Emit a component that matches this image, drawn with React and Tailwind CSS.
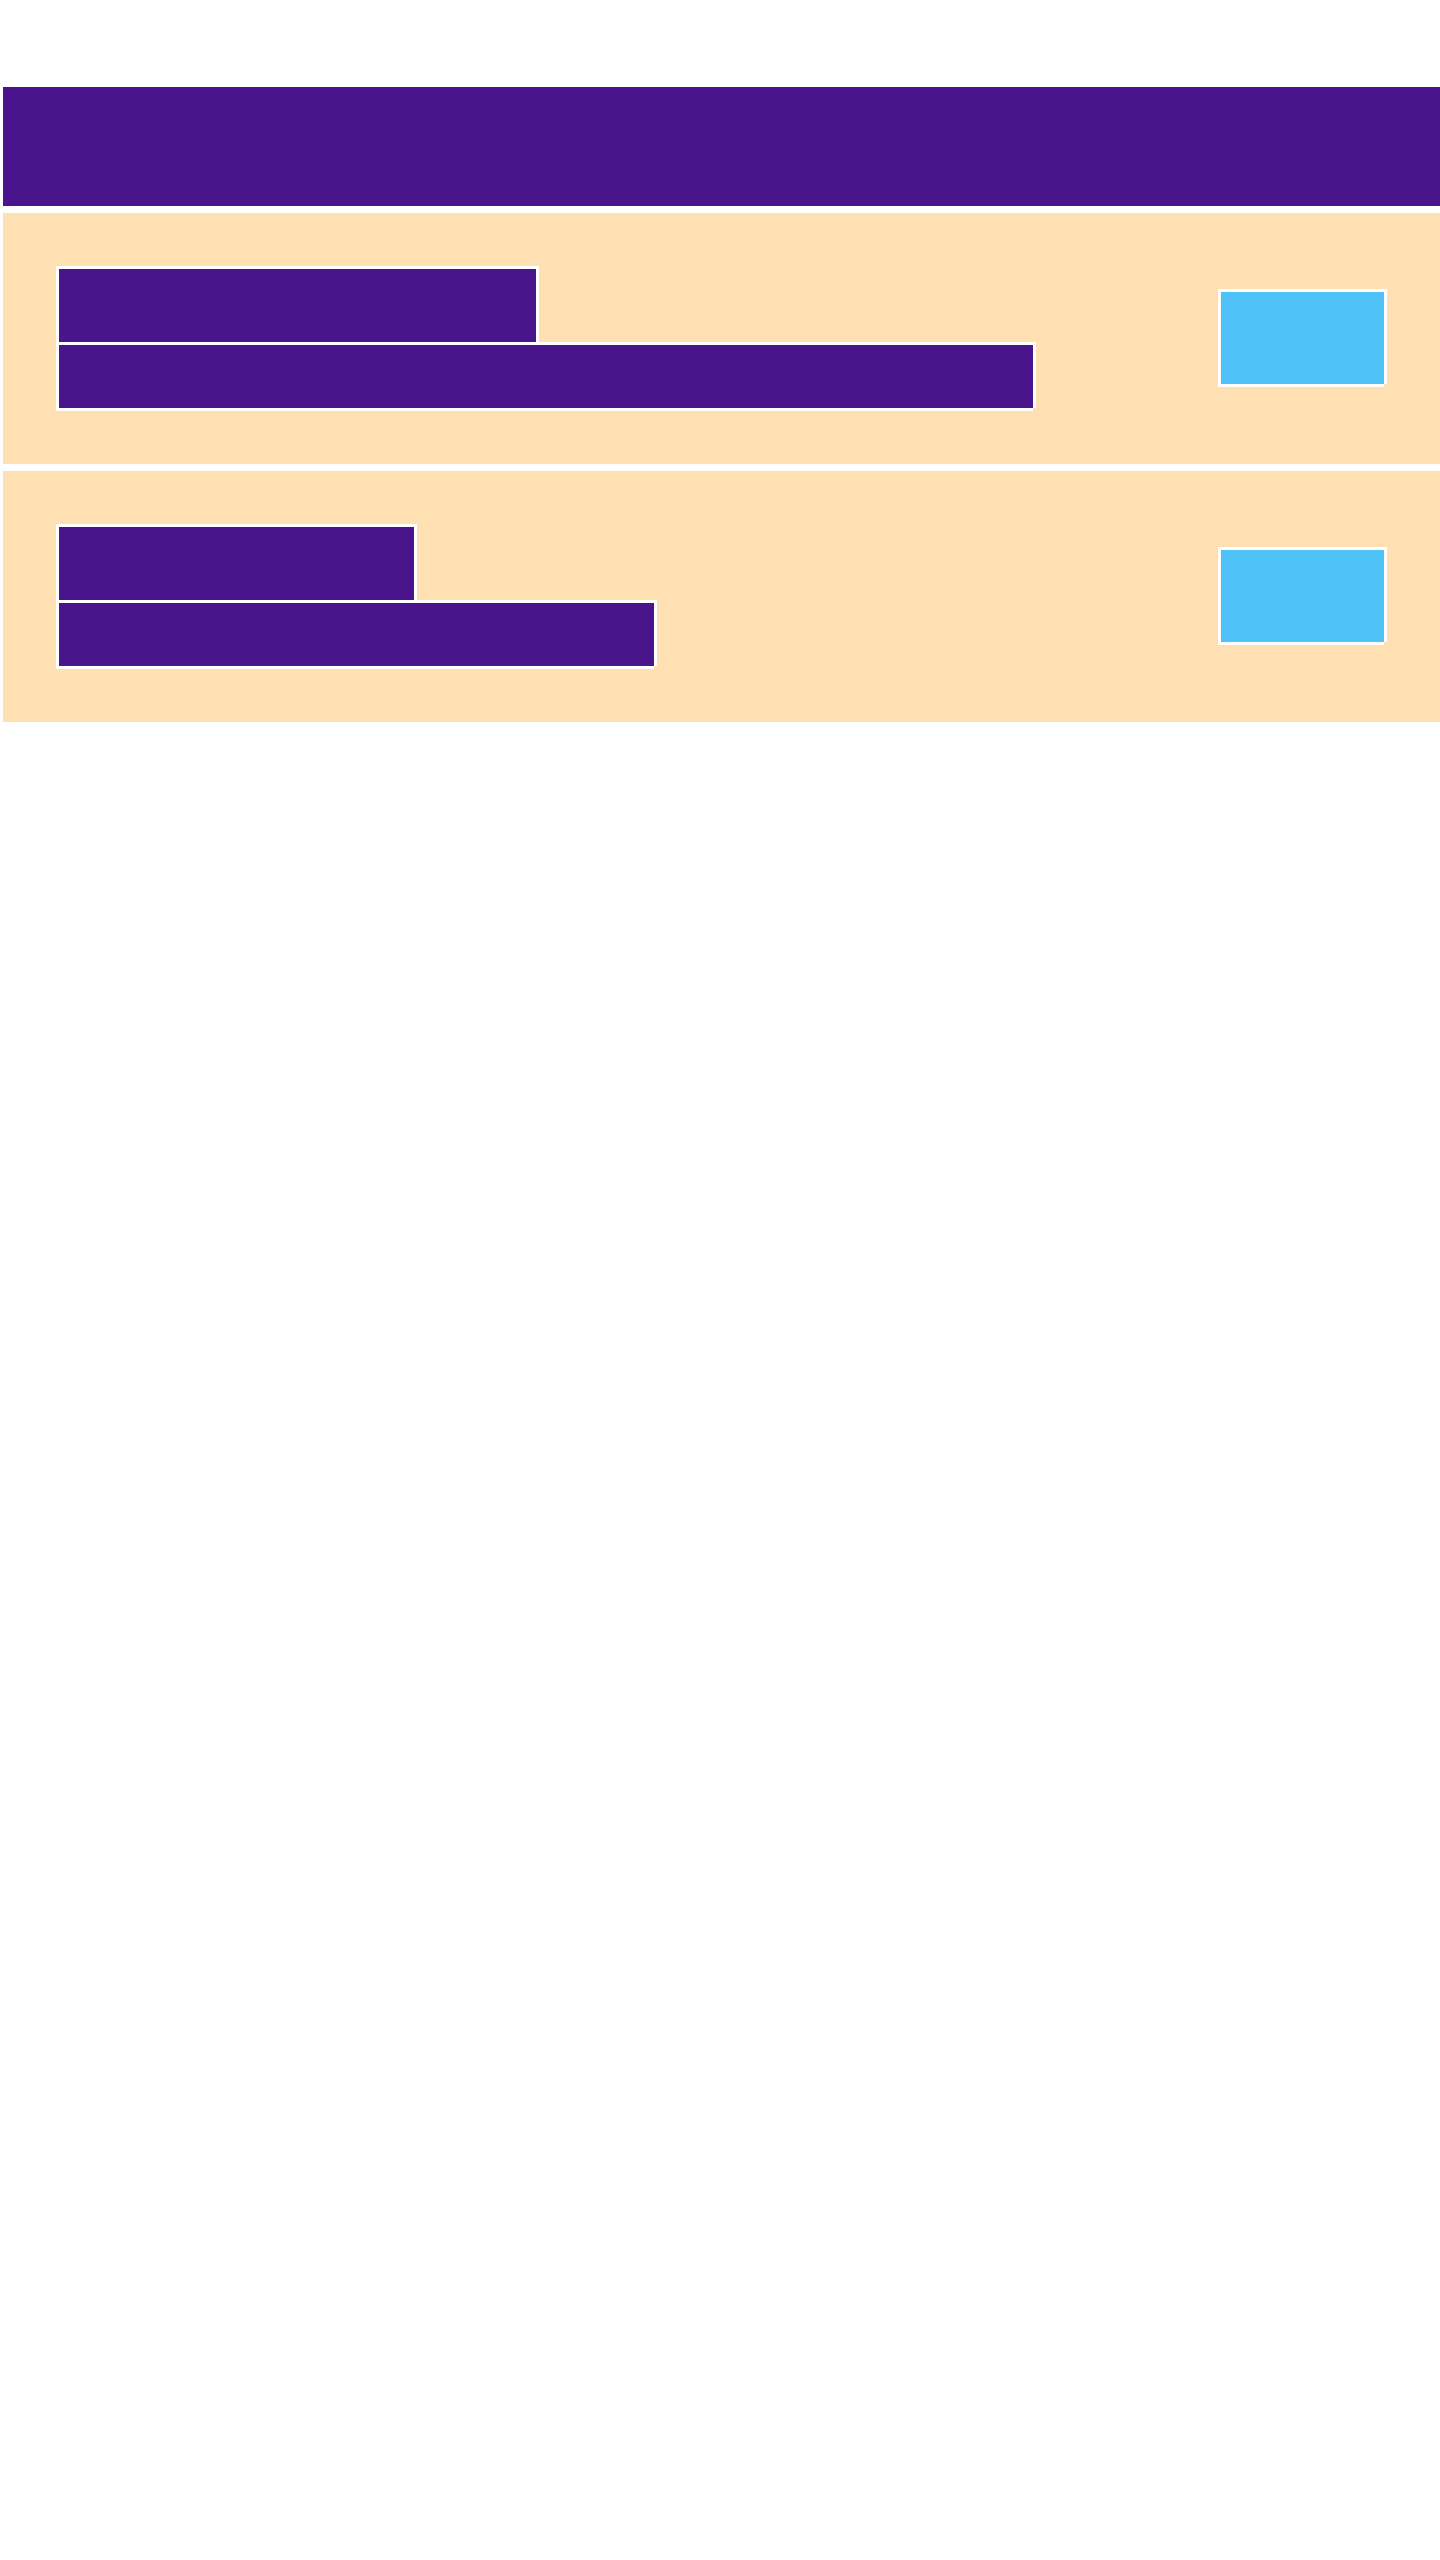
import React from "react";

function Card({ w1, w2 }) {
  return (
    <div className="mt-[7px] flex h-[251px] items-start justify-between bg-[#ffe0b2] pl-[53px] pr-[56px] pt-[53px]">
      <div className="flex flex-col">
        <div
          className={`h-[76px] border-l-[3px] border-t-[3px] border-white bg-[#4a148c] shadow-[3px_0_0_#ffffff,0_3px_0_#ffffff] ${w1}`}
        />
        <div
          className={`h-[66px] border-l-[3px] border-t-[3px] border-white bg-[#4a148c] shadow-[3px_0_0_#ffffff,0_3px_0_#ffffff] ${w2}`}
        />
      </div>
      <div className="mt-[23px] h-[95px] w-[166px] border-l-[3px] border-t-[3px] border-white bg-[#4fc3f7] shadow-[3px_0_0_#ffffff,0_3px_0_#ffffff]" />
    </div>
  );
}

export default function App() {
  return (
    <div className="min-h-[2560px] bg-white pl-[3px] pt-[87px] font-['Liberation_Sans',sans-serif]">
      <div className="h-[119px] bg-[#4a148c]" />
      <Card w1="w-[480px]" w2="w-[977px]" />
      <Card w1="w-[358px]" w2="w-[598px]" />
    </div>
  );
}
